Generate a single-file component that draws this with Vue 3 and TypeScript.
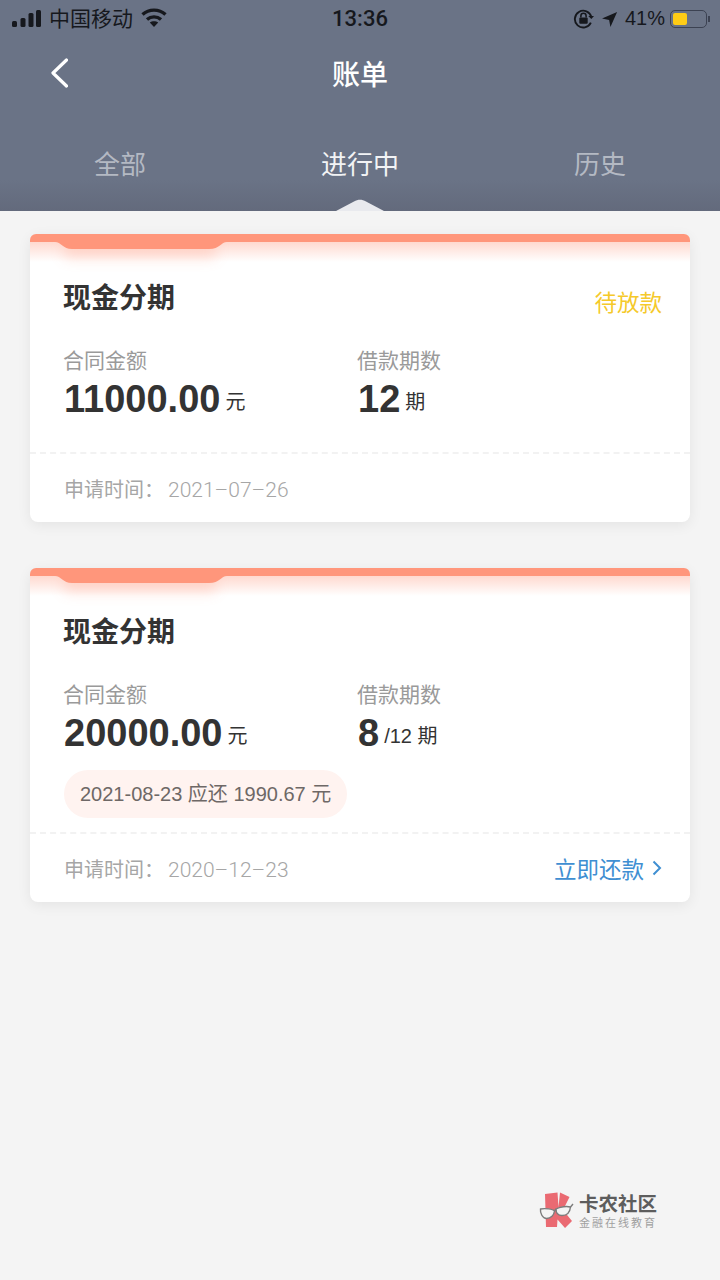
<script setup lang="ts">
type Bill = {
  amount: string
  term: string
  termUnit: string
  applied: string
  status?: string
  notice?: string
  action?: string
}

const tabs = ['全部', '进行中', '历史']

const bills: Bill[] = [
  { amount: '11000.00', term: '12', termUnit: '期', applied: '2021–07–26', status: '待放款' },
  {
    amount: '20000.00',
    term: '8',
    termUnit: '/12 期',
    applied: '2020–12–23',
    notice: '2021-08-23 应还 1990.67 元',
    action: '立即还款',
  },
]
</script>

<template>
  <div class="page">
    <header class="head">
      <div class="status">
        <div class="status-left">
          <svg class="signal" width="29" height="17" viewBox="0 0 29 17">
            <rect x="0" y="11" width="5" height="6" rx="1.500" />
            <rect x="8.500" y="8" width="5" height="9" rx="1.500" />
            <rect x="16.500" y="3" width="5" height="14" rx="1.500" />
            <rect x="24" y="0" width="5" height="17" rx="1.500" />
          </svg>
          <span class="carrier">中国移动</span>
          <svg class="wifi" width="26" height="19" viewBox="0 0 26 19" fill="none">
            <path d="M1.500 6.500C8 .7 18 .7 24.500 6.500" stroke="#16181d" stroke-width="3.400" />
            <path d="M6 11.500C10 8 16 8 20 11.500" stroke="#16181d" stroke-width="3.400" />
            <path d="M13 19L8.800 14.500C11 12.800 15 12.800 17.200 14.500z" fill="#16181d" />
          </svg>
        </div>
        <span class="clock">13:36</span>
        <div class="status-right">
          <svg width="21" height="21" viewBox="0 0 20 20" fill="none">
            <path d="M17.500 8.500A8 8 0 1 0 17 14" stroke="#16181d" stroke-width="1.800" />
            <path d="M14.500 7.500l3 3 2.500-3z" fill="#16181d" />
            <rect x="6" y="9" width="8" height="6" rx="1" fill="#16181d" />
            <path d="M7.500 9V7.500a2.500 2.500 0 0 1 5 0V9" stroke="#16181d" stroke-width="1.500" />
          </svg>
          <svg class="arrow" width="16" height="16" viewBox="0 0 18 18">
            <path d="M17 1L0 8.500l8 1.500 1.500 8z" fill="#16181d" />
          </svg>
          <span class="percent">41%</span>
          <div class="battery"><i class="battery-fill"></i></div>
          <i class="battery-cap"></i>
        </div>
      </div>
      <div class="nav">
        <svg class="back" width="20" height="30" viewBox="0 0 20 30" fill="none">
          <path d="M18.500 2L5 15l13.500 13" stroke="#fff" stroke-width="3.200" stroke-linecap="round" stroke-linejoin="round" />
        </svg>
        <h1 class="title">账单</h1>
      </div>
      <div class="tabs">
        <div v-for="(tab, i) in tabs" :key="tab" class="tab" :class="{ active: i === 1 }">
          {{ tab }}
          <svg v-if="i === 1" class="peak" width="48" height="12" viewBox="0 0 48 12">
            <path d="M0 12L18 2.500C22 0 26 0 30 2.500L48 12z" fill="#e9eaee" />
          </svg>
        </div>
      </div>
    </header>

    <main class="list">
      <section v-for="bill in bills" :key="bill.applied" class="card">
        <svg class="ribbon" width="660" height="46" viewBox="0 0 660 46">
          <defs>
            <linearGradient id="fade" x1="0" y1="0" x2="0" y2="1">
              <stop offset="0" stop-color="#ff967b" stop-opacity="0.36" />
              <stop offset="1" stop-color="#ff967b" stop-opacity="0" />
            </linearGradient>
            <filter id="soft" x="-20%" y="-100%" width="140%" height="300%">
              <feGaussianBlur stdDeviation="7" />
            </filter>
          </defs>
          <path d="M0 8H660V28H0z" fill="url(#fade)" />
          <path d="M34 10H186V24H34z" fill="#ff967b" opacity="0.3" filter="url(#soft)" />
          <path d="M0 8V6a6 6 0 0 1 6-6H654a6 6 0 0 1 6 6V8H197C191 8 190 15 179 15H42C33 15 31 8 25 8z" fill="#ff967b" />
        </svg>
        <div class="body">
          <div class="row-title">
            <h2 class="name">现金分期</h2>
            <span v-if="bill.status" class="status-text">{{ bill.status }}</span>
          </div>
          <div class="figures">
            <div>
              <div class="label">合同金额</div>
              <div class="value">{{ bill.amount }}<span class="unit">元</span></div>
            </div>
            <div>
              <div class="label">借款期数</div>
              <div class="value">{{ bill.term }}<span class="unit">{{ bill.termUnit }}</span></div>
            </div>
          </div>
          <div v-if="bill.notice" class="notice">{{ bill.notice }}</div>
        </div>
        <div class="foot">
          <span class="applied"><span class="applied-key">申请时间：</span>{{ bill.applied }}</span>
          <span v-if="bill.action" class="action">
            {{ bill.action }}
            <svg width="10" height="16" viewBox="0 0 10 16" fill="none">
              <path d="M1.500 1.500L8 8l-6.500 6.500" stroke="#3f8fd2" stroke-width="2" />
            </svg>
          </span>
        </div>
      </section>
    </main>

    <div class="mark">
      <svg width="48" height="48" viewBox="0 0 48 48">
        <path d="M9 8L21.500 6.500 22.500 21 24 6.500 33.500 11 27 24 36 35 29 42 21.500 33.500 21 41 10 41z" fill="#ea6a72" />
        <path d="M4.500 23C9 22 17 23 18.500 25 18 29 15 32.500 10.500 32.500 6.500 32.500 4 27 4.500 23z" fill="#f4f4f4" stroke="#7c7c7c" stroke-width="1.400" />
        <path d="M20 23C24 20.500 31 20 34.500 21 34 26 31 29.500 26 29.500 22 29.500 20 27 20 23z" fill="#f4f4f4" stroke="#7c7c7c" stroke-width="1.400" />
        <path d="M18.500 25L20 23M34.500 21L37 18" stroke="#7c7c7c" stroke-width="1.400" fill="none" />
      </svg>
      <div class="mark-text">
        <strong>卡农社区</strong>
        <span>金融在线教育</span>
      </div>
    </div>
  </div>
</template>

<style scoped>
.page {
  position: relative;
  height: 1280px;
  overflow: hidden;
  background: #f4f4f4;
  font-family: "Liberation Sans", "Noto Sans CJK SC", sans-serif;
}

.head {
  height: 211px;
  background: linear-gradient(#6a7386 0, #6a7386 180px, #636a7c 211px);
}

.status {
  display: flex;
  align-items: center;
  justify-content: space-between;
  height: 37px;
  padding: 0 10px 0 12px;
  color: #16181d;
  position: relative;
}

.status-left,
.status-right {
  display: flex;
  align-items: center;
}

.signal,
.arrow {
  fill: #16181d;
}

.carrier {
  margin-left: 8px;
  margin-top: -3px;
  font-size: 21px;
}

.wifi {
  margin-left: 8px;
  margin-top: -2px;
}

.clock {
  position: absolute;
  left: 0;
  right: 0;
  text-align: center;
  font-family: Roboto, sans-serif;
  font-size: 22px;
  font-weight: 500;
}

.arrow {
  margin-left: 8px;
}

.percent {
  margin-left: 7px;
  font-size: 20px;
}

.battery {
  box-sizing: border-box;
  width: 37px;
  height: 18px;
  margin-left: 5px;
  padding: 2px;
  border: 1.500px solid #3c4252;
  border-radius: 5px;
}

.battery-fill {
  display: block;
  width: 14px;
  height: 100%;
  border-radius: 2px;
  background: #ffcc15;
}

.battery-cap {
  width: 2px;
  height: 6px;
  margin-left: 1px;
  background: #3c4252;
}

.nav {
  position: relative;
  display: flex;
  align-items: center;
  justify-content: center;
  height: 72px;
}

.back {
  position: absolute;
  left: 48px;
  top: 21px;
}

.title {
  margin: 0;
  color: #fff;
  font-size: 28px;
  font-weight: 500;
}

.tabs {
  display: grid;
  grid-template-columns: repeat(3, 240px);
  height: 102px;
}

.tab {
  position: relative;
  padding-top: 34px;
  text-align: center;
  color: #b4b9c3;
  font-size: 26px;
  line-height: 44px;
}

.tab.active {
  color: #f2f3f5;
}

.peak {
  position: absolute;
  left: 96px;
  bottom: 0;
}

.list {
  display: flex;
  flex-direction: column;
  gap: 46px;
  padding: 23px 30px 0;
}

.card {
  position: relative;
  border-radius: 8px;
  background: #fff;
  box-shadow: 0 3px 14px rgba(0, 0, 0, 0.07);
}

.ribbon {
  display: block;
  margin-bottom: 1px;
}

.body {
  padding: 0 28px 14px 34px;
}

.row-title {
  display: flex;
  align-items: center;
  justify-content: space-between;
}

.name {
  margin: 0 0 0 -1px;
  color: #333;
  font-size: 28px;
  font-weight: 700;
  line-height: 36px;
}

.status-text {
  margin-top: 4px;
  color: #f5c92a;
  font-size: 22.500px;
}

.figures {
  display: grid;
  grid-template-columns: 294px 1fr;
  margin-top: 31px;
  margin-bottom: 17px;
}

.label {
  margin-left: -1px;
  color: #9a9a9a;
  font-size: 21px;
  line-height: 26px;
}

.value {
  margin-top: 3px;
  color: #333;
  font-size: 38px;
  font-weight: 700;
  line-height: 44px;
}

.unit {
  margin-left: 5px;
  font-size: 20px;
  font-weight: 400;
  vertical-align: 3px;
  line-height: 1;
}

.notice {
  display: inline-block;
  margin-top: -2px;
  padding: 0 16px;
  height: 48px;
  border-radius: 24px;
  background: #fff3f0;
  color: #6e6866;
  font-size: 20px;
  line-height: 48px;
}

.foot {
  display: flex;
  align-items: center;
  justify-content: space-between;
  height: 68px;
  padding: 0 28px 0 34px;
  border-top: 2px dashed #f2f2f2;
}

.applied {
  color: #a6a6a6;
  font-family: Roboto, "Noto Sans CJK SC", sans-serif;
  font-size: 21px;
  font-weight: 300;
}

.applied-key {
  margin-right: 4px;
  font-size: 20px;
  font-weight: 400;
}

.action {
  display: flex;
  align-items: center;
  gap: 8px;
  color: #3f8fd2;
  font-size: 22.500px;
}

.mark {
  position: absolute;
  left: 536px;
  top: 1186px;
  display: flex;
}

.mark svg {
  margin-right: -5px;
}

.mark-text {
  display: flex;
  flex-direction: column;
  padding-top: 7px;
}

.mark-text strong {
  color: #5d5d5d;
  font-size: 19.500px;
  line-height: 23px;
}

.mark-text span {
  color: #a0a0a0;
  font-size: 11px;
  letter-spacing: 2px;
  line-height: 14px;
}
</style>
